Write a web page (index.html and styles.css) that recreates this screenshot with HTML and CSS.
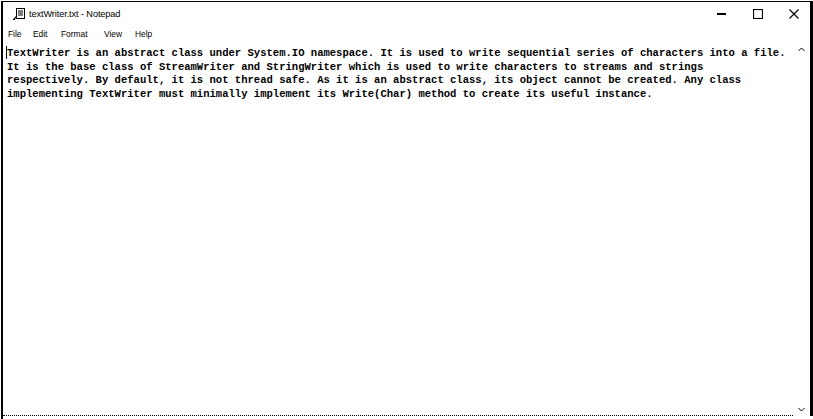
FILE: index.html
```html
<!DOCTYPE html>
<html>
<head>
<meta charset="utf-8">
<link rel="stylesheet" href="styles.css">
<title>textWriter.txt - Notepad</title>
</head>
<body>
<div class="window">
  <div class="titlebar">
    <svg class="app-icon" width="12" height="12" viewBox="0 0 12 12">
      <rect x="3.5" y="0.5" width="8" height="10" fill="#fff" stroke="#000"/>
      <line x1="5" y1="3" x2="10" y2="3" stroke="#000"/>
      <line x1="5" y1="5" x2="10" y2="5" stroke="#000"/>
      <line x1="5" y1="7" x2="10" y2="7" stroke="#000"/>
      <path d="M1 11 L4 8 M0 11.5 L2 11.5" stroke="#000" stroke-width="1.2"/>
    </svg>
    <span class="title">textWriter.txt - Notepad</span>
    <div class="controls">
      <span class="ctl"><svg width="10" height="10" viewBox="0 0 10 10"><rect x="0" y="4" width="9" height="2" fill="#000"/></svg></span>
      <span class="ctl"><svg width="10" height="10" viewBox="0 0 10 10"><rect x="0.5" y="0.5" width="9" height="9" fill="none" stroke="#000" stroke-width="1.2"/></svg></span>
      <span class="ctl"><svg width="10" height="10" viewBox="0 0 10 10"><path d="M0.5 0.5 L9.5 9.5 M9.5 0.5 L0.5 9.5" stroke="#000" stroke-width="1.2"/></svg></span>
    </div>
  </div>
  <div class="menubar">
    <span class="menu m-file">File</span>
    <span class="menu m-edit">Edit</span>
    <span class="menu m-format">Format</span>
    <span class="menu m-view">View</span>
    <span class="menu m-help">Help</span>
  </div>
  <div class="editor">
    <div class="text"><span class="caret"></span>TextWriter is an abstract class under System.IO namespace. It is used to write sequential series of characters into a file.
It is the base class of StreamWriter and StringWriter which is used to write characters to streams and strings
respectively. By default, it is not thread safe. As it is an abstract class, its object cannot be created. Any class
implementing TextWriter must minimally implement its Write(Char) method to create its useful instance.</div>
    <div class="vscroll">
      <svg class="arrow" width="7" height="5" viewBox="0 0 7 5"><path d="M0.5 4 L3.5 1 L6.5 4" fill="none" stroke="#000"/></svg>
      <svg class="arrow" width="7" height="5" viewBox="0 0 7 5"><path d="M0.5 1 L3.5 4 L6.5 1" fill="none" stroke="#000"/></svg>
    </div>
  </div>
</div>
</body>
</html>
```
FILE: styles.css
```css
html, body {
  margin: 0;
  padding: 0;
  background: #fff;
}
.window {
  box-sizing: border-box;
  width: 812px;
  height: 418px;
  margin: 1px 0 0 1px;
  border-top: 1px solid #000;
  border-left: 2px solid #000;
  display: flex;
  flex-direction: column;
  font-family: "Liberation Sans", Arial, sans-serif;
  color: #000;
}
.titlebar {
  height: 24px;
  display: flex;
  align-items: center;
  padding-left: 10px;
  border-right: 3px solid #000;
}
.app-icon {
  margin-right: 4px;
}
.title {
  font-size: 9.2px;
  letter-spacing: -0.1px;
}
.controls {
  margin-left: auto;
  display: flex;
  gap: 26px;
  padding-right: 11px;
}
.ctl {
  width: 10px;
  height: 10px;
  display: flex;
}
.menubar {
  height: 15px;
  display: flex;
  align-items: center;
  padding-left: 5px;
  font-size: 8.4px;
  border-right: 3px solid #000;
}
.m-file { width: 25px; }
.m-edit { width: 28px; }
.m-format { width: 43px; }
.m-view { width: 31px; }
.editor {
  flex: 1;
  display: flex;
  border-right: 3px solid #000;
  margin-bottom: 3px;
  min-height: 0;
}
.text {
  flex: 1;
  min-width: 0;
  overflow: hidden;
  white-space: pre;
  font-family: "Liberation Mono", "Courier New", monospace;
  font-size: 10.55px;
  line-height: 13.7px;
  font-weight: bold;
  padding: 6px 0 0 4px;
  position: relative;
  border-bottom: 1px dotted #000;
}
.caret {
  position: absolute;
  left: 3px;
  top: 5px;
  width: 1px;
  height: 13px;
  background: #000;
}
.vscroll {
  width: 17px;
  display: flex;
  flex-direction: column;
  justify-content: space-between;
  align-items: center;
  padding: 6px 0 4px;
}
```
